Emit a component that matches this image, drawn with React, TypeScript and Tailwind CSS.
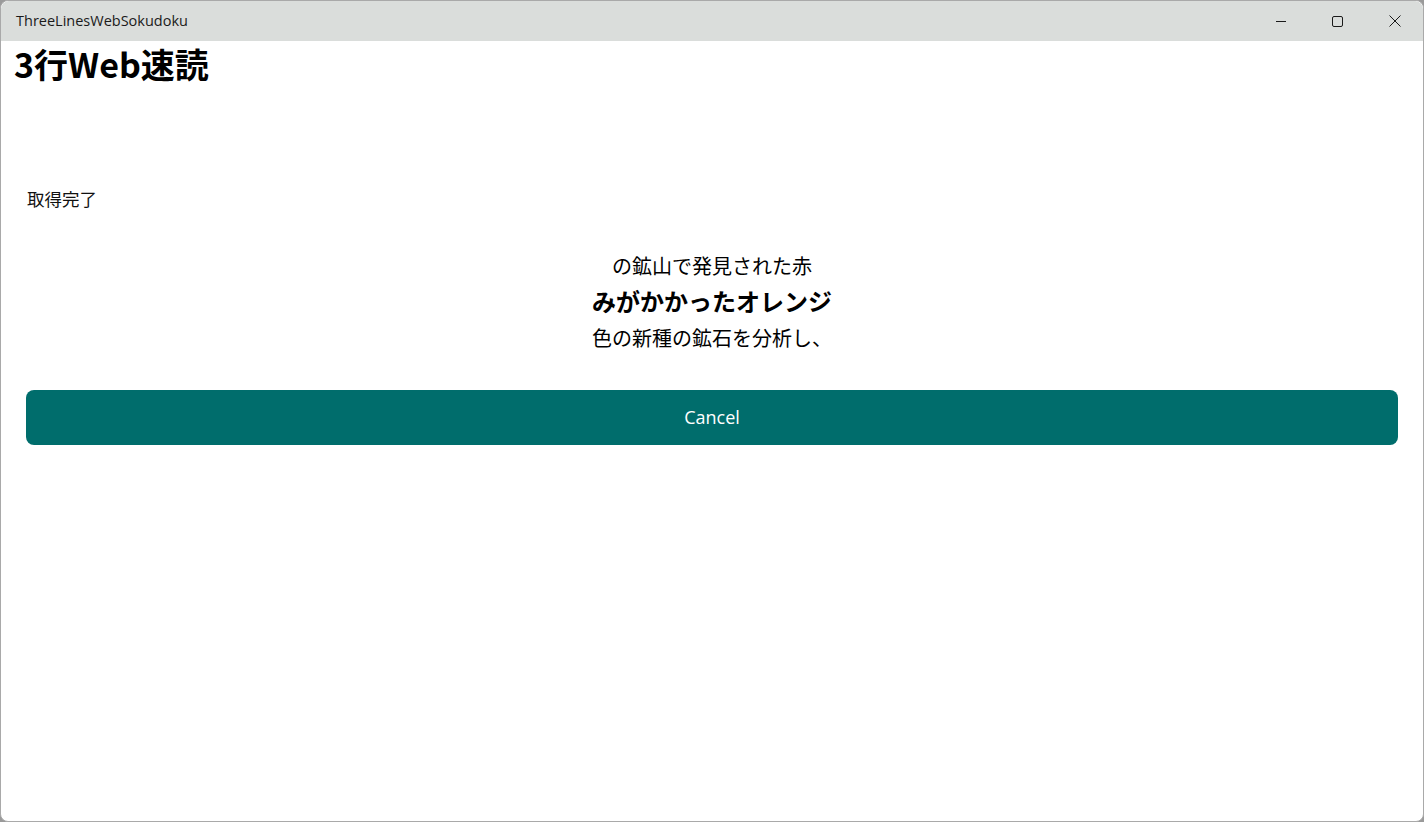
import React from "react";

const jp = { fontFamily: '"Noto Sans CJK JP", "Noto Sans", sans-serif' };

function TitleBar() {
  return (
    <div className="flex h-10 shrink-0 items-center bg-[#dadddb] rounded-t-lg">
      <span
        className="pl-[15px] text-[14.5px] text-[#1a1a1a]"
        style={{ fontFamily: '"Open Sans", "Noto Sans", sans-serif' }}
      >
        ThreeLinesWebSokudoku
      </span>
      <div className="ml-auto flex h-full">
        <button className="flex h-full w-[57px] items-center justify-center">
          <svg width="10" height="10" viewBox="0 0 10 10">
            <path d="M0 5.5h10" stroke="#1a1a1a" strokeWidth="1" />
          </svg>
        </button>
        <button className="flex h-full w-[57px] items-center justify-center">
          <svg width="11" height="11" viewBox="0 0 11 11">
            <rect x="0.5" y="0.5" width="10" height="10" rx="1.5" fill="none" stroke="#1a1a1a" strokeWidth="1" />
          </svg>
        </button>
        <button className="flex h-full w-[57px] items-center justify-center">
          <svg width="12" height="12" viewBox="0 0 12 12">
            <path d="M0.5 0.5l11 11M11.5 0.5l-11 11" stroke="#1a1a1a" strokeWidth="1" />
          </svg>
        </button>
      </div>
    </div>
  );
}

export default function App() {
  return (
    <div className="h-[822px] w-[1424px] overflow-hidden bg-[#9a9a9a]">
      <div className="flex h-full w-full flex-col overflow-hidden rounded-lg border border-[#a9a9a9] bg-white">
        <TitleBar />
        <div className="flex flex-col px-[13px]" style={jp}>
          <h1 className="mt-[1px] text-[34px] font-bold leading-[44px] text-black">3行Web速読</h1>
          <p className="ml-[13px] mt-[101px] text-[17.5px] leading-6 text-[#111]">取得完了</p>
          <div className="mt-[38px] flex flex-col items-center text-black">
            <span className="text-[20px] leading-[34px]">の鉱山で発見された赤</span>
            <span className="text-[24px] font-bold leading-[36px]">みがかかったオレンジ</span>
            <span className="text-[20px] leading-[38px]">色の新種の鉱石を分析し、</span>
          </div>
          <button
            className="mx-[12px] mt-[33px] h-[55px] rounded-lg bg-[#006d6c] text-[18px] text-white"
            style={{ fontFamily: '"Open Sans", "Noto Sans", sans-serif' }}
          >
            Cancel
          </button>
        </div>
      </div>
    </div>
  );
}
